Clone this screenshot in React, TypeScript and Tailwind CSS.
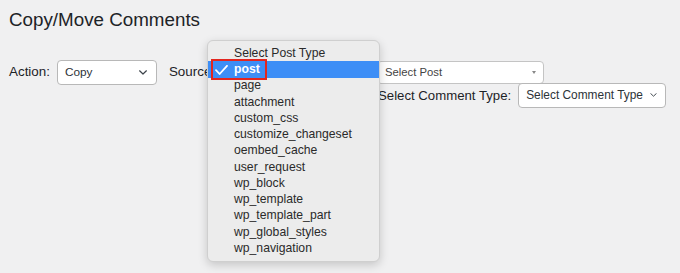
const postTypes = [
  "post",
  "page",
  "attachment",
  "custom_css",
  "customize_changeset",
  "oembed_cache",
  "user_request",
  "wp_block",
  "wp_template",
  "wp_template_part",
  "wp_global_styles",
  "wp_navigation",
]

const Chevron = ({ className }: { className: string }) => (
  <svg className={className} viewBox="0 0 8 5" fill="none">
    <path d="M0.6 0.8 L4 4 L7.4 0.8" stroke="#3c434a" strokeWidth="1.2" strokeLinecap="round" strokeLinejoin="round" />
  </svg>
)

export default function App() {
  return (
    <div className="relative w-[680px] h-[273px] overflow-hidden bg-[#f0f0f1] pl-[9px] text-[#1d2327] font-['Liberation_Sans',Arial,sans-serif]">
      <div className="pt-[11px] text-[18.8px] leading-[18.8px]">Copy/Move Comments</div>

      <div className="mt-[30.2px] flex h-[25px] items-center">
        <span className="text-[13.4px]">Action:</span>
        <div className="ml-[7px] flex h-[25px] w-[100px] items-center justify-between rounded-[4px] border border-[#b8b8b8] bg-white pl-[7px] pr-[9px] text-[11.8px] text-[#2c3338]">
          <span>Copy</span>
          <Chevron className="w-[8px] h-[5px]" />
        </div>
        <span className="ml-[12px] w-[43px] text-[13.4px]">Source</span>
        <div className="ml-[6px] h-[25px] w-[150px] rounded-[4px] border border-[#b8b8b8] bg-white" />
        <div className="ml-[9px] flex h-[23px] w-[167px] items-center justify-between rounded-[4px] border border-[#c4c4c4] bg-white pl-[7px] pr-[7px] text-[11.3px] text-[#444]">
          <span>Select Post</span>
          <span className="h-0 w-0 border-x-[2.5px] border-t-[3px] border-x-transparent border-t-[#888]" />
        </div>
      </div>

      <div className="-mt-[2px] flex h-[25px] items-center pl-[369px]">
        <span className="text-[13.2px]">Select Comment Type:</span>
        <div className="ml-[7px] flex h-[25px] w-[148px] items-center justify-between rounded-[4px] border border-[#b8b8b8] bg-white pl-[7px] pr-[8px] text-[11.9px] text-[#2c3338]">
          <span>Select Comment Type</span>
          <Chevron className="w-[7px] h-[4px]" />
        </div>
      </div>

      <div className="absolute left-[207px] top-[40px] h-[222px] w-[173px] rounded-[6px] border border-[#cfcfcf] bg-[#ececec] pt-[4px] text-[12.2px] text-[#2a2a2a] shadow-[0_3px_10px_rgba(0,0,0,0.18)]">
        <div className="flex h-[16.25px] items-center pl-[26px]">Select Post Type</div>
        {postTypes.map((t) =>
          t === "post" ? (
            <div key={t} className="relative flex h-[16.25px] items-center bg-[#3d8ef6] pl-[26px] font-bold text-white">
              <svg className="absolute left-[7px] top-[3.5px] w-[13px] h-[10px]" viewBox="0 0 13 10" fill="none">
                <path d="M1 5.2 L4.6 9 L12 0.8" stroke="white" strokeWidth="1.8" strokeLinecap="round" strokeLinejoin="round" />
              </svg>
              {t}
              <div className="absolute left-[3px] top-[-2.5px] h-[21px] w-[56px] border-2 border-[#e3261f]" />
            </div>
          ) : (
            <div key={t} className="flex h-[16.25px] items-center pl-[26px]">
              {t}
            </div>
          )
        )}
      </div>
    </div>
  )
}
